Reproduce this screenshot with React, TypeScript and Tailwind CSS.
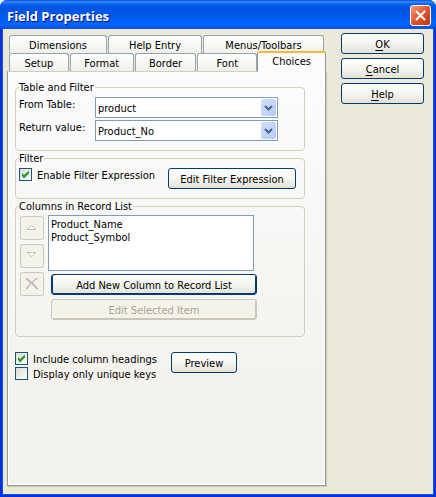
import React, { useState } from "react";

const buttonBase =
  "h-[21px] rounded-[3px] border pt-[2px] text-center whitespace-nowrap flex items-center justify-center";
const activeButton =
  "border-[#003c74] bg-linear-to-b from-white via-[#f5f5f1] to-[#e4e1d6] text-black";
const disabledButton = "border-[#c9c7ba] bg-[#f4f3ea] text-[#a7a594]";

function PushButton({ className = "", children }: { className?: string; children: React.ReactNode }) {
  return (
    <button type="button" className={`${buttonBase} ${activeButton} ${className}`}>
      <span>{children}</span>
    </button>
  );
}

function Tab({ label }: { label: string }) {
  return (
    <button
      type="button"
      role="tab"
      aria-selected={false}
      className="flex h-[18px] items-center justify-center rounded-t-[3px] border border-b-0 border-[#91a7b4] bg-linear-to-b from-white to-[#f0f0ea] pt-[2px] whitespace-nowrap"
    >
      {label}
    </button>
  );
}

function Group({ title, className = "", children }: { title: string; className?: string; children: React.ReactNode }) {
  return (
    <fieldset className={`min-w-0 rounded-[4px] border border-[#d0d0bf] pl-[3px] ${className}`}>
      <legend className="h-[14px] pr-px leading-4">{title}</legend>
      {children}
    </fieldset>
  );
}

function Combo({ id, label, value }: { id: string; label: string; value: string }) {
  return (
    <div className="flex h-[21px]">
      <label htmlFor={id} className="w-[76px] leading-4">
        {label}
      </label>
      <div className="relative flex-1">
        <select
          id={id}
          className="block h-[21px] w-full appearance-none border border-[#7f9db9] bg-white pt-[2px] pl-[2px]"
        >
          <option>{value}</option>
        </select>
        <span className="pointer-events-none absolute top-[2px] right-[2px] flex h-[17px] w-[15px] items-center justify-center rounded-[2px] bg-linear-to-br from-[#d2e0fc] to-[#b3c9f8]">
          <svg width="9" height="6" viewBox="0 0 9 6" fill="none" aria-hidden="true">
            <path d="M1 1l3.5 3.5L8 1" stroke="#4d6185" strokeWidth="2" />
          </svg>
        </span>
      </div>
    </div>
  );
}

function Check({ label, initial }: { label: string; initial: boolean }) {
  const [on, setOn] = useState(initial);
  return (
    <label className="flex h-[13px] items-center gap-[5px] whitespace-nowrap">
      <span className="relative block size-[13px]">
        <input
          type="checkbox"
          checked={on}
          onChange={() => setOn(!on)}
          className="block size-[13px] appearance-none border border-[#1c5180] bg-linear-to-br from-[#dcdcd7] to-white"
        />
        {on && (
          <svg className="pointer-events-none absolute inset-0" width="13" height="13" viewBox="0 0 13 13" aria-hidden="true">
            <path d="M3 5l2 2 5-4.500v3L5 10.500 3 8z" fill="#21a121" />
          </svg>
        )}
      </span>
      <span className="pt-[2px]">{label}</span>
    </label>
  );
}

function ToolButton({ label, children }: { label: string; children: React.ReactNode }) {
  return (
    <button
      type="button"
      disabled
      aria-label={label}
      className="flex size-6 items-center justify-center rounded-[3px] border border-[#c9c7ba] bg-[#f4f3ea] pr-px pb-[2px]"
    >
      {children}
    </button>
  );
}

export default function App() {
  return (
    <div className="flex min-h-screen flex-col bg-white font-['DejaVu_Sans_Condensed','DejaVu_Sans',sans-serif] text-[11px] leading-[14px] text-black">
      <main className="flex flex-1 flex-col overflow-hidden rounded-t-[7px] bg-[#0831d9]">
        <header className="flex h-[29px] items-center justify-between bg-[linear-gradient(to_bottom,#0a4fd8_0%,#3a8bff_7%,#0663ee_14%,#0054e3_28%,#0058ea_55%,#0066ff_85%,#0050dc_96%,#003fc4_100%)] pt-[2px] pr-[5px] pl-[7px]">
          <h1 className="font-['Open_Sans','Noto_Sans',sans-serif] text-[13px] font-bold text-white [text-shadow:1px_1px_#0f1089]">
            Field Properties
          </h1>
          <button
            type="button"
            aria-label="Close"
            className="flex size-[21px] items-center justify-center rounded-[3px] border border-white bg-linear-to-br from-[#ee9a80] via-[#e0552e] to-[#c03510]"
          >
            <svg width="13" height="13" viewBox="0 0 13 13" aria-hidden="true">
              <path d="M2 2l9 9M11 2l-9 9" stroke="#fff" strokeWidth="2" />
            </svg>
          </button>
        </header>

        <div className="mx-[3px] mb-[3px] flex flex-1 gap-[15px] bg-[#ece9d8] pr-[9px] pb-2 pl-1 shadow-[0_0_0_1px_#0855ee]">
          <div className="flex min-w-0 flex-1 flex-col pt-[6px]">
            <div role="tablist" className="pl-[2px]">
              <div className="mr-[2px] grid grid-cols-[98fr_94fr_121fr] gap-px">
                <Tab label="Dimensions" />
                <Tab label="Help Entry" />
                <Tab label="Menus/Toolbars" />
              </div>
              <div className="grid grid-cols-[60fr_64fr_62fr_60fr_68fr] gap-x-px">
                <Tab label="Setup" />
                <Tab label="Format" />
                <Tab label="Border" />
                <Tab label="Font" />
                <button
                  type="button"
                  role="tab"
                  aria-selected={true}
                  className="relative -mt-[2px] -mb-px -ml-px flex h-[21px] items-center justify-center rounded-t-[3px] border-x border-t-2 border-x-[#919b9c] border-t-[#ffb833] bg-[#fcfcfe] pb-[2px]"
                >
                  Choices
                </button>
              </div>
            </div>

            <section
              role="tabpanel"
              className="flex flex-1 flex-col border border-[#919b9c] border-t-[#d0cebf] bg-linear-to-b from-[#fcfcfe] to-[#f4f3ee] to-70% pt-2 pr-5 pl-[7px] shadow-[1px_1px_1px_#cfccbb,inset_0_0_0_1px_#fff]"
            >
              <Group title="Table and Filter" className="pb-[9px]">
                <div className="mt-[3px] flex flex-col gap-[2px] pr-[26px]">
                  <Combo id="from-table" label="From Table:" value="product" />
                  <Combo id="return-value" label="Return value:" value="Product_No" />
                </div>
              </Group>

              <Group title="Filter" className="pb-[9px]">
                <div className="mt-[3px] flex items-start justify-between pr-2">
                  <Check label="Enable Filter Expression" initial />
                  <PushButton className="w-[128px]">Edit Filter Expression</PushButton>
                </div>
              </Group>

              <Group title="Columns in Record List" className="pb-4">
                <div className="mt-[2px] flex gap-1 pr-[47px] pl-px">
                  <div className="flex flex-col gap-1 pt-px">
                    <ToolButton label="Move up">
                      <svg width="9" height="6" viewBox="0 0 9 6" aria-hidden="true">
                        <path d="M.5 5.500h8L4.500 1z" fill="#fff" stroke="#c0beb0" />
                      </svg>
                    </ToolButton>
                    <ToolButton label="Move down">
                      <svg width="9" height="6" viewBox="0 0 9 6" aria-hidden="true">
                        <path d="M.5.5h8L4.500 5z" fill="#fff" stroke="#c0beb0" />
                      </svg>
                    </ToolButton>
                    <ToolButton label="Delete">
                      <svg width="14" height="13" viewBox="0 0 14 13" fill="none" stroke="#bdbbb0" aria-hidden="true">
                        <path d="M1 1.500c4 2.500 8 6 11.500 10.500" strokeWidth="2" />
                        <path d="M12.500 1C8 4 4 8 1.500 12" strokeWidth="1.500" />
                      </svg>
                    </ToolButton>
                  </div>
                  <div className="min-w-0 flex-1">
                    <select
                      size={4}
                      aria-label="Columns in Record List"
                      className="block h-[56px] w-[calc(100%-3px)] overflow-hidden border border-[#7f9db9] bg-white pt-[2px]"
                    >
                      <option className="h-[13px] min-h-0 p-0 pl-[2px] leading-[13px]">Product_Name</option>
                      <option className="h-[13px] min-h-0 p-0 pl-[2px] leading-[13px]">Product_Symbol</option>
                    </select>
                    <div className="mt-[3px] flex flex-col gap-1 pl-[3px]">
                      <PushButton className="shadow-[inset_-1px_-1px_#003c74,inset_1px_0_#003c74]">Add New Column to Record List</PushButton>
                      <button type="button" disabled className={`${buttonBase} ${disabledButton} shadow-[inset_-1px_-1px_#c9c7ba]`}>
                        Edit Selected Item
                      </button>
                    </div>
                  </div>
                </div>
              </Group>

              <div className="mt-[15px] flex">
                <div className="flex w-[156px] flex-col gap-[2px]">
                  <Check label="Include column headings" initial />
                  <Check label="Display only unique keys" initial={false} />
                </div>
                <PushButton className="w-[66px]">Preview</PushButton>
              </div>
            </section>
          </div>

          <div className="flex w-[83px] flex-col gap-1 pt-1">
            <PushButton>
              <u className="underline-offset-2">O</u>K
            </PushButton>
            <PushButton>
              <u className="underline-offset-2">C</u>ancel
            </PushButton>
            <PushButton>
              <u className="underline-offset-2">H</u>elp
            </PushButton>
          </div>
        </div>
      </main>
    </div>
  );
}
